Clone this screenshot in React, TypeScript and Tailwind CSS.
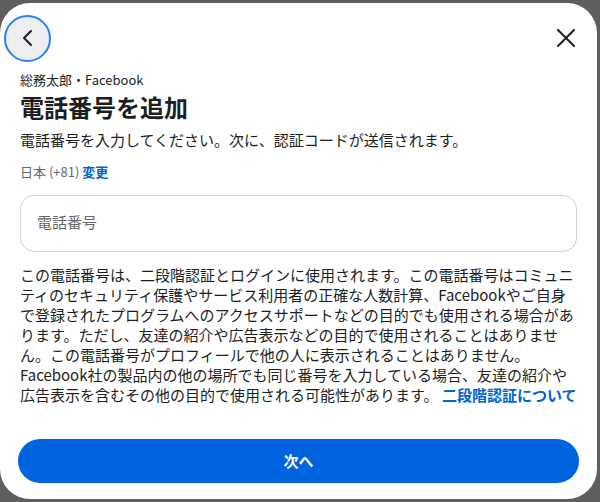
import React from "react";

export default function App() {
  const font = { fontFamily: '"Noto Sans CJK JP", "Noto Sans", sans-serif' };
  return (
    <div className="w-[600px] h-[502px] bg-[#5e5e5e] pt-[3px] overflow-hidden" style={font}>
      <div className="w-[597px] h-[496px] bg-white rounded-[30px] flex flex-col px-[20px]">
        <div className="flex items-center justify-between h-[64px] pt-[6px]">
          <button className="-ml-[16px] w-[47px] h-[47px] rounded-full bg-[#eceef1] border-2 border-[#2d7ff0] flex items-center justify-center">
            <svg width="20" height="20" viewBox="0 0 20 20" fill="none">
              <path d="M13 3 L6 10 L13 17" stroke="#1c1e21" strokeWidth="2" strokeLinecap="round" strokeLinejoin="round" />
            </svg>
          </button>
          <button className="mr-[-1px] w-[24px] h-[24px] flex items-center justify-center">
            <svg width="18" height="18" viewBox="0 0 18 18" fill="none">
              <path d="M1 1 L17 17 M17 1 L1 17" stroke="#1c1e21" strokeWidth="2" strokeLinecap="round" />
            </svg>
          </button>
        </div>
        <div className="text-[13px] leading-[16px] text-[#1c1e21] mt-[5px]">総務太郎・Facebook</div>
        <h1 className="text-[24px] leading-[30px] font-bold text-[#1c1e21] mt-[4px]">電話番号を追加</h1>
        <p className="text-[15px] leading-[20px] text-[#1c1e21] mt-[8px]">電話番号を入力してください。次に、認証コードが送信されます。</p>
        <div className="text-[13px] leading-[16px] text-[#65676b] mt-[14px]">
          日本 (+81) <span className="text-[#0064d1] font-bold">変更</span>
        </div>
        <div className="mt-[15px] h-[57px] border border-[#ccd0d5] rounded-[14px] flex items-center px-[16px] pb-[3px]">
          <span className="text-[15px] text-[#65676b]">電話番号</span>
        </div>
        <p className="mt-[13px] text-[15px] leading-[20px] text-[#1c1e21]">
          この電話番号は、二段階認証とログインに使用されます。この電話番号はコミュニティのセキュリティ保護やサービス利用者の正確な人数計算、Facebookやご自身で登録されたプログラムへのアクセスサポートなどの目的でも使用される場合があります。ただし、友達の紹介や広告表示などの目的で使用されることはありません。この電話番号がプロフィールで他の人に表示されることはありません。Facebook社の製品内の他の場所でも同じ番号を入力している場合、友達の紹介や広告表示を含むその他の目的で使用される可能性があります。{" "}
          <span className="text-[#0064d1] font-bold">二段階認証について</span>
        </p>
        <div className="flex-1" />
        <button className="mb-[16px] -mx-[2px] h-[44px] rounded-full bg-[#0064e0] text-white text-[15px] font-semibold">次へ</button>
      </div>
    </div>
  );
}
